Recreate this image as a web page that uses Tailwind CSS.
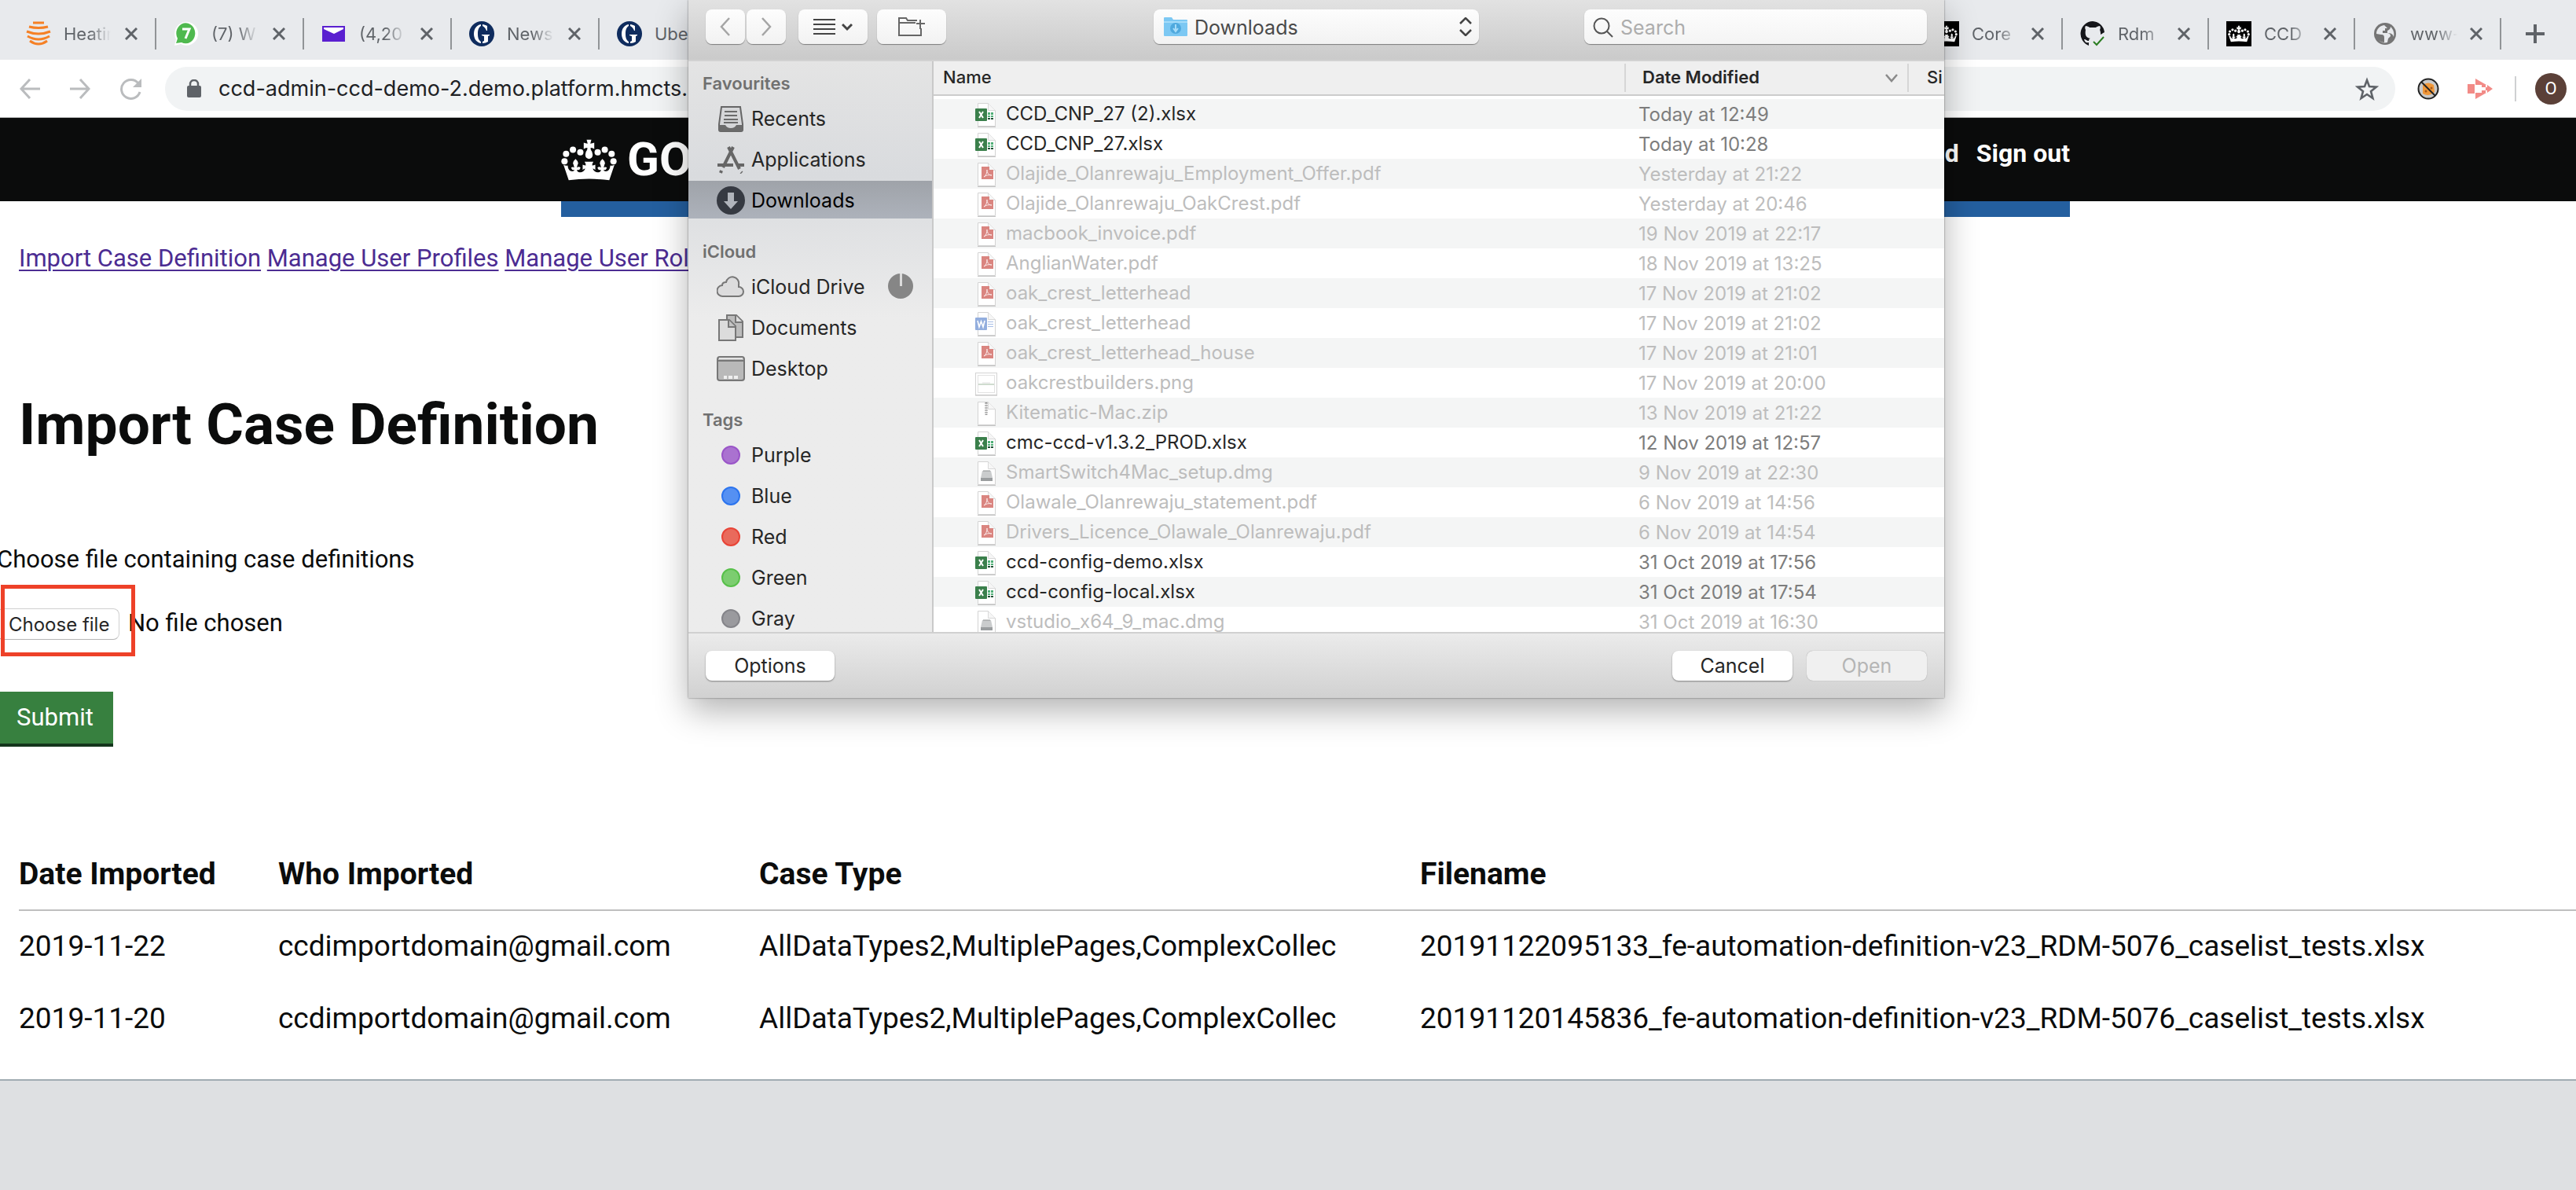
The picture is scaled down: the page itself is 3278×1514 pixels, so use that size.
<!DOCTYPE html>
<html lang="en">
<head>
<meta charset="utf-8">
<title>Import Case Definition</title>
<script src="https://cdn.jsdelivr.net/npm/@tailwindcss/browser@4"></script>
</head>
<body class="relative flex min-h-screen flex-col overflow-x-hidden bg-white font-['Roboto',sans-serif] text-[31px] leading-10 text-[#0b0c0c]">

<!-- Shared icons -->
<svg class="hidden" aria-hidden="true">
  <symbol id="crown" viewBox="44 42 212 158">
    <g fill="#fff">
      <circle cx="57" cy="126" r="12"/><circle cx="63" cy="98" r="12"/><circle cx="89" cy="82" r="12"/><circle cx="117" cy="92" r="12"/>
      <circle cx="183" cy="92" r="12"/><circle cx="210" cy="82" r="12"/><circle cx="236" cy="98" r="12"/><circle cx="243" cy="126" r="12"/>
      <path d="M141 44h18l-4 15q8-1 15-4v24q-8-4-14-4l1 8q7 7 7 18 0 14-14 16-14-2-14-16 0-11 7-18l1-8q-6 0-14 4V55q7 3 15 4z"/>
      <path d="M53 139q8 5 16 3 2 22 17 22 8 0 9-5-10 2-13-8 5-6 12-1-1-8-5-16 1-10 10-17 9 7 10 17-4 8-5 16 8-6 14 1-3 10-14 8 1 8 11 9 14 1 21-14-6 0-10 5v-20q6 3 12 3 0-8-5-14h34q-5 6-5 14 6 0 12-3v20q-4-5-10-5 7 15 21 14 10-1 11-9-11 2-14-8 6-7 14-1-1-8-5-16 1-10 10-17 9 7 10 17-4 8-5 16 7-5 12 1-3 10-13 8 1 5 9 5 15 0 17-22 8 2 16-3l-20 59q-77-10-154 0z"/>
    </g>
  </symbol>
  <symbol id="close" viewBox="0 0 16 16"><path d="M1 1l14 14M15 1L1 15" stroke="#5f6368" stroke-width="3" fill="none"/></symbol>
  <symbol id="guardian" viewBox="0 0 32 32">
    <circle cx="16" cy="16" r="16" fill="#0f2c5e"/>
    <path d="M15 4C9 5 6 10 6 16s3 11 9 12v-2c-3-2-4-5-4-10s1-8 4-10zM17 4v2c2 1 4 3 5 6h1V6c-2-1-4-2-6-2zM16 17h10v1l-2 1v7c-2 1-4 2-7 2v-2l2-1v-6l-3-1z" fill="#fff"/>
  </symbol>
  <symbol id="page" viewBox="0 0 30 34">
    <path d="M4.500 2.500h13l9 9v20h-22z" fill="#fff" stroke="#d3d3d3"/><path d="M17.500 2.500v9h9" fill="#f6f6f6" stroke="#d9d9d9"/><path d="M4 32.500h23" stroke="#c4c4c4"/>
  </symbol>
  <symbol id="xls" viewBox="0 0 30 34">
    <use href="#page" width="30" height="34"/><rect x="1" y="9" width="15" height="16" rx="1" fill="#3a7f4b"/>
    <path d="M6 13l5 8M11 13l-5 8" stroke="#fff" stroke-width="2"/>
    <path d="M17 14h3v3h-3zM21 14h3v3h-3zM17 18h3v2h-3zM21 18h3v2h-3z" fill="#4fae76"/><path d="M17 21h3v2h-3zM21 21h3v2h-3z" fill="#1f4e33"/>
  </symbol>
  <symbol id="pdf" viewBox="0 0 30 34">
    <use href="#page" width="30" height="34"/><path d="M9 7h10v4h5v12H9z" fill="#da8580"/>
    <path d="M12 20c3-2 4-5 4-9 0 4 2 7 6 7-4-1-7 0-10 2z" fill="none" stroke="#fbe9e8" stroke-width="1"/>
  </symbol>
  <symbol id="doc" viewBox="0 0 30 34">
    <use href="#page" width="30" height="34"/><rect x="1" y="9" width="15" height="16" rx="1" fill="#93aede"/>
    <path d="M4 13l2 8 2.500-7 2.500 7 2-8" stroke="#fff" stroke-width="1.600" fill="none"/><path d="M17 14.500h7M17 17.500h7M17 20.500h7" stroke="#a9bfe6"/>
  </symbol>
  <symbol id="png" viewBox="0 0 30 34">
    <rect x="1.500" y="3.500" width="27" height="28" fill="#fff" stroke="#d4d4d4"/><rect x="4.500" y="6.500" width="21" height="22" fill="#fff" stroke="#e2e2e2"/>
    <path d="M5 18h20" stroke="#cfdccf" stroke-width="2"/><path d="M10 16h10" stroke="#e0e0e0"/><path d="M1 32h28" stroke="#c0c0c0"/>
  </symbol>
  <symbol id="zip" viewBox="0 0 30 34">
    <use href="#page" width="30" height="34"/><path d="M15 3v16" stroke="#8d8d8d" stroke-width="3" stroke-dasharray="2 1"/><path d="M15 4v14" stroke="#dedede"/>
  </symbol>
  <symbol id="dmg" viewBox="0 0 30 34">
    <use href="#page" width="30" height="34"/><path d="M10 14h11l2 9v3H8v-3z" fill="#cacccd"/><path d="M8 23h15v4H8z" fill="#9a9d9f"/><path d="M11 14h9" stroke="#8f9293"/>
  </symbol>
</svg>

<!-- Browser tabs -->
<nav aria-label="Tabs" class="flex h-[76px] items-center justify-between bg-[#e8eaed] pt-[10px] pr-10 pl-[11px] font-['Inter',sans-serif] text-[22px] leading-8">
  <div class="flex">
    <div class="flex h-10 w-[188px] items-center border-r-2 border-[#919497] pr-[22px] pl-[22px]">
      <svg class="mr-4 size-8" viewBox="0 0 32 32" fill="none" stroke="#f58025" stroke-width="3"><path d="M9 2h14M4 7q12 3 24 0M1 13q15 6 30 0M2 19q14 8 28 0M5 25q11 8 22 0"/></svg>
      <span class="w-[60px] overflow-hidden bg-linear-to-r from-[#5f6368] from-55% to-transparent bg-clip-text whitespace-nowrap text-transparent">Heatin</span>
      <button class="ml-auto" aria-label="Close tab"><svg class="size-4"><use href="#close"/></svg></button>
    </div>
    <div class="flex h-10 w-[188px] items-center border-r-2 border-[#919497] pr-[22px] pl-[22px]">
      <svg class="mr-4 size-8" viewBox="0 0 32 32"><path d="M1 31l2-8A15 15 0 1 1 9 29z" fill="#fff"/><path d="M3 28l2-6A12 13 0 1 1 10 27z" fill="#4fb94f"/><path d="M11 10h9l-5 12" fill="none" stroke="#fff" stroke-width="3"/></svg>
      <span class="w-[60px] overflow-hidden bg-linear-to-r from-[#5f6368] from-55% to-transparent bg-clip-text whitespace-nowrap text-transparent">(7) W</span>
      <button class="ml-auto" aria-label="Close tab"><svg class="size-4"><use href="#close"/></svg></button>
    </div>
    <div class="flex h-10 w-[188px] items-center border-r-2 border-[#919497] pr-[22px] pl-[22px]">
      <svg class="mr-4 size-8" viewBox="0 0 32 32"><path d="M1 6h29v20H1z" fill="#5a1fd0"/><path d="M3 8h25v2l-12 6L3 10z" fill="#fff"/></svg>
      <span class="w-[60px] overflow-hidden bg-linear-to-r from-[#5f6368] from-55% to-transparent bg-clip-text whitespace-nowrap text-transparent">(4,20</span>
      <button class="ml-auto" aria-label="Close tab"><svg class="size-4"><use href="#close"/></svg></button>
    </div>
    <div class="flex h-10 w-[188px] items-center border-r-2 border-[#919497] pr-[22px] pl-[22px]">
      <svg class="mr-4 size-8"><use href="#guardian"/></svg>
      <span class="w-[60px] overflow-hidden bg-linear-to-r from-[#5f6368] from-55% to-transparent bg-clip-text whitespace-nowrap text-transparent">News</span>
      <button class="ml-auto" aria-label="Close tab"><svg class="size-4"><use href="#close"/></svg></button>
    </div>
    <div class="flex h-10 w-[188px] items-center pr-[22px] pl-[22px]">
      <svg class="mr-4 size-8"><use href="#guardian"/></svg>
      <span class="w-[60px] overflow-hidden whitespace-nowrap text-[#5f6368]">Ube</span>
    </div>
  </div>
  <div class="flex items-center">
    <div class="flex h-10 w-[186px] items-center border-r-2 border-[#919497] pr-[22px] pl-[22px]">
      <span class="mr-4 flex size-8 items-center justify-center bg-black"><svg class="h-6 w-7"><use href="#crown"/></svg></span>
      <span class="w-[60px] overflow-hidden bg-linear-to-r from-[#5f6368] from-55% to-transparent bg-clip-text whitespace-nowrap text-transparent">Core</span>
      <button class="ml-auto" aria-label="Close tab"><svg class="size-4"><use href="#close"/></svg></button>
    </div>
    <div class="flex h-10 w-[186px] items-center border-r-2 border-[#919497] pr-[22px] pl-[22px]">
      <svg class="mr-4 size-8" viewBox="0 0 32 32"><path d="M16 0a16 16 0 0 0-5 31v-4c-4 1-5-1-6-4 3 0 3 2 6 2 0-2 1-3 2-3-6-1-7-5-6-11-1-2-1-4 0-5 2 0 4 1 5 2h8c1-1 3-2 5-2 1 1 1 3 0 5 1 2 1 4 1 6l5-3A16 16 0 0 0 16 0z" fill="#15161a"/><path d="M17 26l4 4 9-10" fill="none" stroke="#2b7d22" stroke-width="2"/></svg>
      <span class="w-[60px] overflow-hidden bg-linear-to-r from-[#5f6368] from-55% to-transparent bg-clip-text whitespace-nowrap text-transparent">Rdm</span>
      <button class="ml-auto" aria-label="Close tab"><svg class="size-4"><use href="#close"/></svg></button>
    </div>
    <div class="flex h-10 w-[186px] items-center border-r-2 border-[#919497] pr-[22px] pl-[22px]">
      <span class="mr-4 flex size-8 items-center justify-center bg-black"><svg class="h-6 w-7"><use href="#crown"/></svg></span>
      <span class="w-[60px] overflow-hidden bg-linear-to-r from-[#5f6368] from-55% to-transparent bg-clip-text whitespace-nowrap text-transparent">CCD</span>
      <button class="ml-auto" aria-label="Close tab"><svg class="size-4"><use href="#close"/></svg></button>
    </div>
    <div class="flex h-10 w-[186px] items-center border-r-2 border-[#919497] pr-[22px] pl-[22px]">
      <svg class="mr-4 size-8" viewBox="0 0 32 32"><circle cx="16" cy="16" r="14" fill="#757575"/><path d="M15 5c-6 1-10 5-10 11l6 1c3 0 4 1 4 4v6c-2 0-5-1-7-3 3 3 6 4 11 3l1-5 3-3c0-3-2-4-5-4h-5v-3h3v-3h3zM23 7c0 3-2 4-4 5v3c4 0 7 1 8 5 1-5 0-9-4-13z" fill="#e8eaed"/></svg>
      <span class="w-[60px] overflow-hidden bg-linear-to-r from-[#5f6368] from-55% to-transparent bg-clip-text whitespace-nowrap text-transparent">www-</span>
      <button class="ml-auto" aria-label="Close tab"><svg class="size-4"><use href="#close"/></svg></button>
    </div>
    <button class="ml-[31px]" aria-label="New tab"><svg class="size-6" viewBox="0 0 24 24"><path d="M12 0v24M0 12h24" stroke="#5f6368" stroke-width="4"/></svg></button>
  </div>
</nav>

<!-- Browser toolbar -->
<div class="flex h-[74px] items-center border-b border-[#b4b4b4] bg-white pr-3 pl-[25px]">
  <button aria-label="Back"><svg class="h-[26px] w-[26px]" viewBox="0 0 26 26" fill="none" stroke="#babcbe" stroke-width="3"><path d="M13 1L2 13l11 12M2 13h24"/></svg></button>
  <button aria-label="Forward" class="ml-[38px]"><svg class="h-[26px] w-[26px]" viewBox="0 0 26 26" fill="none" stroke="#babcbe" stroke-width="3"><path d="M13 1l11 12-11 12M24 13H0"/></svg></button>
  <button aria-label="Reload" class="ml-[38px]"><svg class="h-[28px] w-[28px]" viewBox="0 0 28 28"><path d="M23 7a12 12 0 1 0 2 11" fill="none" stroke="#babcbe" stroke-width="3"/><path d="M27 1v11H16z" fill="#babcbe"/></svg></button>
  <div class="ml-[29px] flex h-14 flex-1 items-center rounded-full bg-[#f1f3f4] pr-[21px] pl-7">
    <svg class="h-6 w-[18px]" viewBox="0 0 18 24"><path d="M4 9V6a5 5 0 0 1 10 0v3" fill="none" stroke="#5f6368" stroke-width="2.500"/><rect y="8" width="18" height="15" rx="2" fill="#5f6368"/></svg>
    <input aria-label="Address" class="ml-[22px] h-10 flex-1 bg-transparent font-['Inter',sans-serif] text-[27px] text-[#202124] outline-none" value="ccd-admin-ccd-demo-2.demo.platform.hmcts.r">
    <button aria-label="Bookmark"><svg class="h-[30px] w-[30px]" viewBox="0 0 30 30"><path d="M15 4l3 8 9 .6-7 5.600 2.400 8.800L15 22l-7.400 5L10 18.200 3 12.600l9-.6z" fill="none" stroke="#5f6368" stroke-width="2.600"/></svg></button>
  </div>
  <svg class="ml-7 size-7" viewBox="0 0 28 28"><circle cx="14" cy="14" r="12.500" fill="#c9c9c9" stroke="#222" stroke-width="2"/><path d="M7 9q7-5 14 0l1 9q-8 7-15 2z" fill="#f0983a"/><circle cx="11" cy="17" r="1.500" fill="#a85b1b"/><circle cx="18" cy="13" r="1.500" fill="#a85b1b"/><path d="M5 5l18 18" stroke="#222" stroke-width="2"/></svg>
  <svg class="ml-9 h-[26px] w-8" viewBox="0 0 32 26" fill="#f28b87"><path d="M0 7h9v12H0zM10 0l14 8H10zM10 26l14-8H10zM25 8l7 5-7 5v-3h-2v-4h2zM18 8h5v3h-5zM18 15h5v3h-5z"/></svg>
  <div class="ml-7 h-8 w-[2px] bg-[#cfd0d2]"></div>
  <button aria-label="Profile" class="ml-6 flex size-10 items-center justify-center rounded-full bg-[#5b4038] text-[22px] text-white">O</button>
</div>

<!-- Site header -->
<header class="h-[106px] bg-[#0b0c0c] text-white">
  <div class="ml-[714px] flex h-full w-[1920px] justify-between">
    <a href="#" class="flex items-center gap-[13px] text-[60px] leading-[60px] font-bold"><svg class="h-[53px] w-[71px]"><use href="#crown"/></svg>GOV.UK</a>
    <div class="flex gap-[22px] pt-[25px] text-[32px] font-bold"><span>d</span><a href="#">Sign out</a></div>
  </div>
</header>
<div class="ml-[714px] h-5 w-[1920px] bg-[#245f9f]"></div>

<main class="pb-[30px]">
  <nav aria-label="Admin" class="pt-[33px] pl-6 text-[#4c2c92]">
    <a href="#" class="underline decoration-2 underline-offset-4">Import Case Definition</a>
    <a href="#" class="underline decoration-2 underline-offset-4">Manage User Profiles</a>
    <a href="#" class="underline decoration-2 underline-offset-4">Manage User Role</a>
  </nav>
  <h1 class="mt-[151px] pl-6 text-[73px] leading-[80px] font-bold">Import Case Definition</h1>

  <form class="mt-28 -ml-1">
    <p>Choose file containing case definitions</p>
    <div class="relative mt-[41px] flex items-baseline">
      <input id="file" type="file" class="sr-only">
      <label for="file" class="h-10 w-[156px] rounded-lg border border-[#d0d0d0] border-b-[#b5b5b5] bg-white pl-[14px] font-['Inter',sans-serif] text-2xl leading-10 text-[#262626]">Choose file</label>
      <span class="ml-[11px] leading-10">No file chosen</span>
      <div class="absolute -top-[29px] left-[5px] h-[91px] w-[171px] border-[5px] border-[#ee4128]"></div>
    </div>
    <button type="button" class="mt-[66px] block h-[70px] w-[148px] border-b-4 border-[#14351c] bg-[#37803f] text-white">Submit</button>
  </form>

  <div class="mt-[117px] pl-6">
    <table class="w-full table-fixed border-separate border-spacing-0 text-left text-[37px] leading-[48px]">
      <colgroup><col class="w-[330px]"><col class="w-[612px]"><col class="w-[841px]"><col></colgroup>
      <thead class="text-[39px] [&_th]:h-[92px] [&_th]:border-b-2 [&_th]:border-[#bfbfbf]">
        <tr><th>Date Imported</th><th>Who Imported</th><th>Case Type</th><th>Filename</th></tr>
      </thead>
      <tbody class="[&_td]:h-[92px] [&_td]:pb-[2px]">
        <tr><td>2019-11-22</td><td>ccdimportdomain@gmail.com</td><td>AllDataTypes2,MultiplePages,ComplexCollec</td><td>20191122095133_fe-automation-definition-v23_RDM-5076_caselist_tests.xlsx</td></tr>
        <tr><td>2019-11-20</td><td>ccdimportdomain@gmail.com</td><td>AllDataTypes2,MultiplePages,ComplexCollec</td><td>20191120145836_fe-automation-definition-v23_RDM-5076_caselist_tests.xlsx</td></tr>
      </tbody>
    </table>
  </div>
</main>
<footer class="flex-1 border-t-2 border-[#a1acb2] bg-[#dee0e2]"></footer>

<!-- File picker -->
<div role="dialog" aria-label="Open file" class="absolute top-0 left-[876px] w-[1598px] bg-[#ececec] font-['Inter',sans-serif] text-[25px] leading-8 text-[#262626] shadow-[0_16px_40px_rgba(0,0,0,0.3),0_0_2px_rgba(0,0,0,0.5)]">
  <div class="flex h-[78px] items-start border-b-2 border-[#d2d2d2] bg-linear-to-b from-[#e2e2e2] to-[#cacaca] px-[22px] pt-3">
    <button aria-label="Back" class="flex h-[44px] w-[50px] items-center justify-center rounded-lg bg-linear-to-b from-[#fdfdfd] to-[#f2f2f2] shadow-[0_1px_1px_rgba(0,0,0,0.4)]"><svg class="h-6 w-4" viewBox="0 0 16 24" fill="none" stroke="#a5a5a5" stroke-width="2.500"><path d="M13 1L3 12l10 11"/></svg></button>
    <button aria-label="Forward" class="ml-[2px] flex h-[44px] w-[50px] items-center justify-center rounded-lg bg-linear-to-b from-[#fdfdfd] to-[#f2f2f2] shadow-[0_1px_1px_rgba(0,0,0,0.4)]"><svg class="h-6 w-4" viewBox="0 0 16 24" fill="none" stroke="#a5a5a5" stroke-width="2.500"><path d="M3 1l10 11L3 23"/></svg></button>
    <button aria-label="List view" class="ml-4 flex h-[44px] w-[88px] items-center justify-center gap-2 rounded-lg bg-linear-to-b from-[#fdfdfd] to-[#f2f2f2] shadow-[0_1px_1px_rgba(0,0,0,0.4)]"><svg class="h-5 w-7" viewBox="0 0 28 20" stroke="#444" stroke-width="2"><path d="M0 1h28M0 7h28M0 13h28M0 19h28"/></svg><svg class="h-3 w-[14px]" viewBox="0 0 14 12" fill="none" stroke="#444" stroke-width="3"><path d="M1 3l6 6 6-6"/></svg></button>
    <button aria-label="New folder" class="ml-3 flex h-[44px] w-[88px] items-center justify-center rounded-lg bg-linear-to-b from-[#fdfdfd] to-[#f2f2f2] shadow-[0_1px_1px_rgba(0,0,0,0.4)]"><svg class="h-6 w-9" viewBox="0 0 36 24" fill="none" stroke="#666" stroke-width="2"><path d="M30 14v9H2V1h9l2 3h12M3 7h20M29 3v12M24 8h11"/></svg></button>
    <div class="relative mr-[134px] ml-auto w-[414px]">
      <select aria-label="Folder" class="block h-[44px] w-full appearance-none rounded-lg bg-linear-to-b from-[#fdfdfd] to-[#f2f2f2] pt-[2px] pl-[52px] text-[25px] text-[#4a4a4a] shadow-[0_1px_1px_rgba(0,0,0,0.4)]"><option>Downloads</option></select>
      <svg class="pointer-events-none absolute top-[9px] left-3 h-[26px] w-8" viewBox="0 0 32 26"><path d="M1 2q0-1 1-1h9l2 3h17q1 0 1 1v19q0 1-1 1H2q-1 0-1-1z" fill="#7cc8f3"/><path d="M1 7h30" stroke="#a6dcf9" stroke-width="2"/><circle cx="16" cy="15" r="7" fill="#4fa9de"/><path d="M16 10v8M13 15l3 4 3-4" fill="none" stroke="#a6dcf9" stroke-width="2"/></svg>
      <svg class="pointer-events-none absolute top-[10px] right-[9px] h-6 w-4" viewBox="0 0 16 24" fill="none" stroke="#444" stroke-width="2.500"><path d="M1 8l7-7 7 7M1 16l7 7 7-7"/></svg>
    </div>
    <div class="relative w-[436px]">
      <input type="search" aria-label="Search" placeholder="Search" class="block h-[44px] w-full rounded-lg bg-linear-to-b from-[#fdfdfd] to-[#f4f4f4] pt-[2px] pl-[46px] text-[25px] shadow-[0_1px_1px_rgba(0,0,0,0.4)] placeholder:text-[#adadad]">
      <svg class="absolute top-[10px] left-[11px] h-[26px] w-[26px]" viewBox="0 0 26 26" fill="none" stroke="#555" stroke-width="2"><circle cx="11" cy="11" r="9.500"/><path d="M18 18l7 7"/></svg>
    </div>
  </div>

  <div class="flex h-[726px] overflow-hidden">
    <aside class="w-[312px] shrink-0 border-r-2 border-[#c9c9c9] bg-linear-to-b from-[#e4e4e4] via-[#d9dbde] via-20% to-[#ececec] to-45% pt-2">
      <h2 class="pl-[18px] text-[22px] leading-10 font-semibold text-[#707070]">Favourites</h2>
      <ul class="mb-[22px] flex flex-col gap-1 [&_a]:flex [&_a]:h-12 [&_a]:items-center [&_a]:gap-2 [&_a]:pt-[2px] [&_a]:pl-9 [&_svg]:h-9 [&_svg]:w-9">
        <li><a href="#"><svg viewBox="0 0 36 36"><path d="M6 3h24l3 22v7q0 2-2 2H5q-2 0-2-2v-7z" fill="#d5d6d8" stroke="#666" stroke-width="2"/><path d="M10 9h16M10 14h16M9 19h18M9 23h18" stroke="#6b6b6b" stroke-width="2"/><path d="M3 26h8q2 4 7 4t7-4h8v8H3z" fill="#6b6b6b"/></svg>Recents</a></li>
        <li><a href="#"><svg viewBox="0 0 36 36" fill="none" stroke="#666" stroke-width="4"><path d="M15 2l14 28M31 34l1 1M21 2L8 28M6 32l-1 3M1 25h20M27 25h8"/></svg>Applications</a></li>
        <li><a href="#" aria-current="true" class="bg-linear-to-b from-[#9fa3a9] to-[#adb2bb] text-black"><svg viewBox="0 0 36 36"><circle cx="18" cy="18" r="18" fill="#363a42"/><path d="M14 8h8v11h5l-9 10-9-10h5z" fill="#b0b4bb"/></svg>Downloads</a></li>
      </ul>
      <h2 class="pl-[18px] text-[22px] leading-10 font-semibold text-[#707070]">iCloud</h2>
      <ul class="mb-[22px] flex flex-col gap-1 [&_a]:flex [&_a]:h-12 [&_a]:items-center [&_a]:gap-2 [&_a]:pt-[2px] [&_a]:pl-9 [&_svg]:h-9 [&_svg]:w-9">
        <li class="relative"><a href="#"><svg viewBox="0 0 36 36"><path d="M8 30a7 7 0 0 1-1-14q0-4 5-4a8 8 0 0 1 16 3q0 2 0 3a6 6 0 0 1 0 12z" fill="#dcdcdd" stroke="#777" stroke-width="2"/></svg>iCloud Drive</a><span class="absolute top-2 right-6 flex size-8 justify-center rounded-full bg-[#868686]"><span class="h-4 w-[3px] bg-[#dcdcdc]"></span></span></li>
        <li><a href="#"><svg viewBox="0 0 36 36" stroke="#777" stroke-width="2"><path d="M13 2h12l8 8v20H13z" fill="#bcbcbc"/><path d="M24 2v9h9" fill="#ddd"/><path d="M3 8h13l8 8v18H3z" fill="#dcdcdc"/><path d="M15 8v9h9" fill="#c4c4c4"/></svg>Documents</a></li>
        <li><a href="#"><svg viewBox="0 0 36 36"><rect x="1" y="3" width="34" height="30" rx="3" fill="#b9b9b9" stroke="#777" stroke-width="2"/><path d="M2 8h32" stroke="#777" stroke-width="2"/><path d="M3 5h30" stroke="#e4e4e4" stroke-width="2"/><path d="M9 27h4v4H9zM15 27h5v4h-5zM22 27h5v4h-5z" fill="#eee"/></svg>Desktop</a></li>
      </ul>
      <h2 class="pl-[18px] text-[22px] leading-10 font-semibold text-[#707070]">Tags</h2>
      <ul class="flex flex-col gap-1 [&_a]:flex [&_a]:h-12 [&_a]:items-center [&_a]:gap-[14px] [&_a]:pt-[2px] [&_a]:pl-[42px] [&_i]:size-6 [&_i]:rounded-full [&_i]:border-2">
        <li><a href="#"><i class="border-[#9a55c8] bg-[#aa72d0]"></i>Purple</a></li>
        <li><a href="#"><i class="border-[#2c74ee] bg-[#5590f2]"></i>Blue</a></li>
        <li><a href="#"><i class="border-[#e84437] bg-[#e96a5c]"></i>Red</a></li>
        <li><a href="#"><i class="border-[#58c04a] bg-[#7ccd70]"></i>Green</a></li>
        <li><a href="#"><i class="border-[#85858a] bg-[#9a9a9e]"></i>Gray</a></li>
      </ul>
    </aside>

    <div class="min-w-0 flex-1 overflow-hidden bg-white">
      <table class="w-full table-fixed border-separate border-spacing-0 text-left text-2xl whitespace-nowrap">
        <colgroup><col><col class="w-[362px]"><col class="w-[45px]"></colgroup>
        <thead class="bg-[#efefef] text-[22px] [&_th]:h-[44px] [&_th]:border-b-2 [&_th]:border-[#cccccc]">
          <tr>
            <th class="pl-3 font-medium">Name</th>
            <th><div class="flex h-9 items-center justify-between border-x-2 border-[#d6d6d6] pr-3 pl-[21px] font-semibold">Date Modified<svg class="h-3 w-4" viewBox="0 0 16 12" fill="none" stroke="#8a8a8a" stroke-width="2.500"><path d="M1 2l7 8 7-8"/></svg></div></th>
            <th class="overflow-hidden pl-[23px] font-medium">Si</th>
          </tr>
        </thead>
        <tbody class="before:block before:h-1 [&_td]:h-[38px] [&_td]:pt-[2px] [&_td:nth-child(2)]:pl-[18px] [&_td:first-child]:pl-[52px] [&_svg]:mr-[10px] [&_svg]:inline-block [&_svg]:h-[34px] [&_svg]:w-[30px] [&_tr:nth-child(odd)]:bg-[#f4f5f5]">
          <tr><td><svg><use href="#xls"/></svg>CCD_CNP_27 (2).xlsx</td><td class="text-[#7d7d7d]">Today at 12:49</td><td></td></tr>
          <tr><td><svg><use href="#xls"/></svg>CCD_CNP_27.xlsx</td><td class="text-[#7d7d7d]">Today at 10:28</td><td></td></tr>
          <tr class="text-[#bdbdbd]"><td><svg><use href="#pdf"/></svg>Olajide_Olanrewaju_Employment_Offer.pdf</td><td>Yesterday at 21:22</td><td></td></tr>
          <tr class="text-[#bdbdbd]"><td><svg><use href="#pdf"/></svg>Olajide_Olanrewaju_OakCrest.pdf</td><td>Yesterday at 20:46</td><td></td></tr>
          <tr class="text-[#bdbdbd]"><td><svg><use href="#pdf"/></svg>macbook_invoice.pdf</td><td>19 Nov 2019 at 22:17</td><td></td></tr>
          <tr class="text-[#bdbdbd]"><td><svg><use href="#pdf"/></svg>AnglianWater.pdf</td><td>18 Nov 2019 at 13:25</td><td></td></tr>
          <tr class="text-[#bdbdbd]"><td><svg><use href="#pdf"/></svg>oak_crest_letterhead</td><td>17 Nov 2019 at 21:02</td><td></td></tr>
          <tr class="text-[#bdbdbd]"><td><svg><use href="#doc"/></svg>oak_crest_letterhead</td><td>17 Nov 2019 at 21:02</td><td></td></tr>
          <tr class="text-[#bdbdbd]"><td><svg><use href="#pdf"/></svg>oak_crest_letterhead_house</td><td>17 Nov 2019 at 21:01</td><td></td></tr>
          <tr class="text-[#bdbdbd]"><td><svg><use href="#png"/></svg>oakcrestbuilders.png</td><td>17 Nov 2019 at 20:00</td><td></td></tr>
          <tr class="text-[#bdbdbd]"><td><svg><use href="#zip"/></svg>Kitematic-Mac.zip</td><td>13 Nov 2019 at 21:22</td><td></td></tr>
          <tr><td><svg><use href="#xls"/></svg>cmc-ccd-v1.3.2_PROD.xlsx</td><td class="text-[#7d7d7d]">12 Nov 2019 at 12:57</td><td></td></tr>
          <tr class="text-[#bdbdbd]"><td><svg><use href="#dmg"/></svg>SmartSwitch4Mac_setup.dmg</td><td>9 Nov 2019 at 22:30</td><td></td></tr>
          <tr class="text-[#bdbdbd]"><td><svg><use href="#pdf"/></svg>Olawale_Olanrewaju_statement.pdf</td><td>6 Nov 2019 at 14:56</td><td></td></tr>
          <tr class="text-[#bdbdbd]"><td><svg><use href="#pdf"/></svg>Drivers_Licence_Olawale_Olanrewaju.pdf</td><td>6 Nov 2019 at 14:54</td><td></td></tr>
          <tr><td><svg><use href="#xls"/></svg>ccd-config-demo.xlsx</td><td class="text-[#7d7d7d]">31 Oct 2019 at 17:56</td><td></td></tr>
          <tr><td><svg><use href="#xls"/></svg>ccd-config-local.xlsx</td><td class="text-[#7d7d7d]">31 Oct 2019 at 17:54</td><td></td></tr>
          <tr class="text-[#bdbdbd]"><td><svg><use href="#dmg"/></svg>vstudio_x64_9_mac.dmg</td><td>31 Oct 2019 at 16:30</td><td></td></tr>
        </tbody>
      </table>
    </div>
  </div>

  <div class="flex h-[84px] items-start border-t-2 border-[#d0d0d0] bg-linear-to-b from-[#ebebeb] to-[#d1d1d1] px-[22px] pt-[22px]">
    <button class="h-[38px] w-[164px] rounded-lg bg-white shadow-[0_1px_2px_rgba(0,0,0,0.4)]">Options</button>
    <button class="ml-auto h-[38px] w-[153px] rounded-lg bg-white shadow-[0_1px_2px_rgba(0,0,0,0.4)]">Cancel</button>
    <button disabled class="ml-[18px] h-[38px] w-[153px] rounded-lg bg-[#f0f0f0] text-[#b5b5b5] shadow-[0_0_1px_rgba(0,0,0,0.4)]">Open</button>
  </div>
</div>
</body>
</html>
